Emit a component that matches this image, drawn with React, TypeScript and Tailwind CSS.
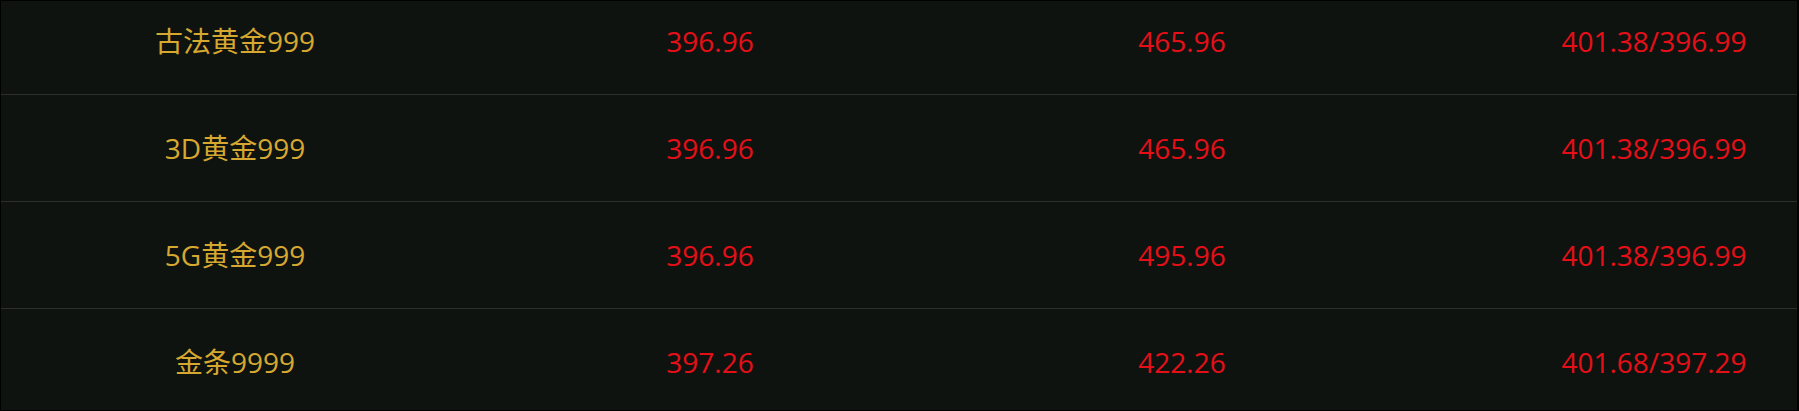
const rows = [
  { name: "古法黄金999", buy: "396.96", sell: "465.96", range: "401.38/396.99" },
  { name: "3D黄金999", buy: "396.96", sell: "465.96", range: "401.38/396.99" },
  { name: "5G黄金999", buy: "396.96", sell: "495.96", range: "401.38/396.99" },
  { name: "金条9999", buy: "397.26", sell: "422.26", range: "401.68/397.29" },
];

export default function App() {
  return (
    <div
      className="w-[1799px] h-[411px] overflow-hidden border border-r-2 border-black bg-[#0f1310]"
      style={{ fontFamily: '"Open Sans", "Noto Sans CJK SC", sans-serif' }}
    >
      <div className="-mt-[13px]">
        {rows.map((row) => (
          <div
            key={row.name}
            className="grid grid-cols-[468px_482px_462px_1fr] items-center h-[107px] border-b border-[#2e2f2d] text-[28px]"
          >
            <div className="text-center text-[#d6a830]">{row.name}</div>
            <div className="text-center text-[#e60f18]">{row.buy}</div>
            <div className="text-center text-[#e60f18]">{row.sell}</div>
            <div className="text-center pl-[98px] text-[#e60f18]">{row.range}</div>
          </div>
        ))}
      </div>
    </div>
  );
}
